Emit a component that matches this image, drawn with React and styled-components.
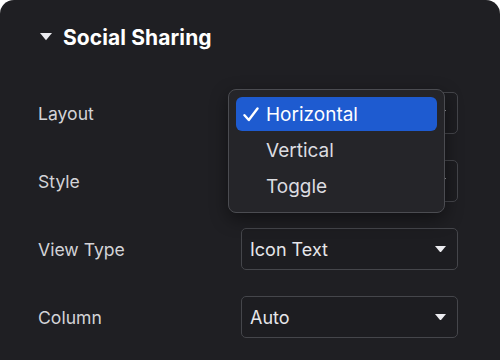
import React from 'react';
import styled, { createGlobalStyle } from 'styled-components';

const GlobalStyle = createGlobalStyle`
  html, body {
    margin: 0;
    background: #ffffff;
  }
  body {
    font-family: Inter, "Liberation Sans", sans-serif;
    -webkit-font-smoothing: antialiased;
  }
`;

const Panel = styled.section`
  width: 500px;
  height: 360px;
  box-sizing: border-box;
  background: #1f1f23;
  border-radius: 14px 14px 0 0;
  padding: 23px 42px 0 38px;
  color: #d6d6da;
`;

const Header = styled.div`
  display: flex;
  align-items: center;
  gap: 11px;
  height: 28px;
  margin-left: 2px;
`;

const Title = styled.h2`
  margin: 0;
  font-size: 21px;
  font-weight: 700;
  color: #ffffff;
  letter-spacing: 0.1px;
`;

const Form = styled.div`
  display: grid;
  grid-template-columns: 203px 217px;
  row-gap: 26px;
  margin-top: 41px;
`;

const Label = styled.span`
  font-size: 17.6px;
  color: #d3d3d7;
  align-self: center;
`;

const Field = styled.div`
  position: relative;
`;

const Select = styled.div`
  height: 42px;
  box-sizing: border-box;
  display: flex;
  align-items: center;
  justify-content: space-between;
  padding: 0 11px 0 8px;
  border: 1px solid #45464b;
  border-radius: 5px;
  background: #1d1d21;
  font-size: 18px;
  color: #e6e6ea;
`;

const Menu = styled.ul`
  position: absolute;
  left: -13px;
  top: -3px;
  width: 217px;
  margin: 0;
  padding: 7px 7px 8px;
  box-sizing: border-box;
  list-style: none;
  background: #252529;
  border: 1px solid #4b4c51;
  border-radius: 8px;
  box-shadow: 0 6px 18px rgba(0, 0, 0, 0.45);
  z-index: 2;
`;

const Item = styled.li`
  height: ${p => (p.$active ? 34 : 36)}px;
  margin-bottom: ${p => (p.$active ? 1 : 0)}px;
  display: flex;
  align-items: center;
  padding-left: 7px;
  border-radius: 6px;
  background: ${p => (p.$active ? '#1e5bd0' : 'transparent')};
  color: ${p => (p.$active ? '#ffffff' : '#dcdce0')};
  font-size: 19px;
`;

const Check = styled.span`
  width: 23px;
  display: inline-flex;
  align-items: center;
`;

const Caret = ({ size = 11 }) => (
  <svg width={size} height={size * 0.6} viewBox="0 0 10 6">
    <path d="M0 0h10L5 6z" fill="#ececf0" />
  </svg>
);

// Layout and Style sit under the open menu, so their values are not shown
const rows = [
  { label: 'Layout', value: 'Horizontal', open: true, covered: true },
  { label: 'Style', value: '', covered: true },
  { label: 'View Type', value: 'Icon Text' },
  { label: 'Column', value: 'Auto' },
];

const options = ['Horizontal', 'Vertical', 'Toggle'];

export default function App() {
  return (
    <>
      <GlobalStyle />
      <Panel>
        <Header>
          <Caret size={12} />
          <Title>Social Sharing</Title>
        </Header>
        <Form>
          {rows.map(row => (
            <React.Fragment key={row.label}>
              <Label>{row.label}</Label>
              <Field>
                <Select>
                  <span>{row.covered ? '' : row.value}</span>
                  <Caret />
                </Select>
                {row.open && (
                  <Menu>
                    {options.map(opt => (
                      <Item key={opt} $active={opt === row.value}>
                        <Check>
                          {opt === row.value && (
                            <svg width="16" height="15" viewBox="0 0 16 15">
                              <path d="M1.5 8.2 5.8 13 14.5 1.5" fill="none" stroke="#fff" strokeWidth="2.4" strokeLinecap="round" strokeLinejoin="round" />
                            </svg>
                          )}
                        </Check>
                        {opt}
                      </Item>
                    ))}
                  </Menu>
                )}
              </Field>
            </React.Fragment>
          ))}
        </Form>
      </Panel>
    </>
  );
}
